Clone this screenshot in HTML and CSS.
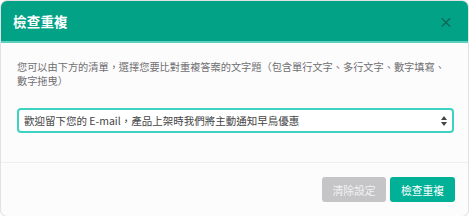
FILE: index.html
```html
<!DOCTYPE html>
<html lang="zh-Hant">
  <head>
    <meta charset="UTF-8" />
    <meta name="viewport" content="width=device-width, initial-scale=1.0" />
    <title>檢查重複</title>
    <link rel="stylesheet" href="styles.css">
  </head>
  <body>
    <div class="modal">
      <div class="modal-header">
        <h2 class="modal-title">檢查重複</h2>
        <span class="close">&times;</span>
      </div>

      <div class="modal-body">
        <p class="hint">您可以由下方的清單，選擇您要比對重複答案的文字題（包含單行文字、多行文字、數字填寫、數字拖曳）</p>
        <!-- question picker -->
        <div class="picker">
          <span class="picker-text">歡迎留下您的 E-mail，產品上架時我們將主動通知早鳥優惠</span>
          <svg class="picker-arrows" width="6" height="10" viewBox="0 0 6 10">
            <path d="M3 0 L6 4 L0 4 Z" fill="#444" />
            <path d="M0 6 L6 6 L3 10 Z" fill="#444" />
          </svg>
        </div>
      </div>

      <div class="modal-footer">
        <button class="btn btn-clear">清除設定</button>
        <button class="btn btn-check">檢查重複</button>
      </div>
    </div>
  </body>
</html>
```

FILE: styles.css
```css
/* Basic reset */
body,
html {
  margin: 0;
  padding: 0;
  background-color: #ffffff;
  font-family: "Noto Sans CJK TC", "Liberation Sans", sans-serif;
}

/* Dialog box */
.modal {
  margin: 1px 0 0 1px;
  width: 467px;
  background-color: #fdfcfd;
  border-radius: 6px;
  box-shadow: 0 0 0 1px #e2e1e3;
  overflow: hidden;
}

.modal-header {
  display: flex;
  justify-content: space-between;
  align-items: center;
  height: 40px;
  padding: 0 12px 0 12px;
  background-color: #02a287;
  border-bottom: 2px solid #5fcfbf;
}

.modal-title {
  margin: 0;
  color: #ffffff;
  font-size: 13.5px;
  font-weight: bold;
  letter-spacing: 0.2px;
}

.close {
  color: #0e6a5b;
  font-size: 14px;
  font-weight: bold;
  line-height: 1;
  margin-right: 3px;
}

/* Body */
.modal-body {
  padding: 17px 14px 29px 16px;
}

.hint {
  margin: 0 0 20px 0;
  color: #6f6f71;
  font-size: 10.2px;
  line-height: 14px;
}

.picker {
  display: flex;
  align-items: center;
  justify-content: space-between;
  height: 21px;
  padding: 0 5px 0 5px;
  border: 2px solid #3ed2c2;
  border-radius: 4px;
  background-color: #ffffff;
}

.picker-text {
  color: #444446;
  font-size: 10.5px;
}

.picker-arrows {
  display: block;
}

/* Footer */
.modal-footer {
  display: flex;
  justify-content: flex-end;
  gap: 4px;
  padding: 14px 13px 14px 0;
  border-top: 1px solid #f0eef0;
}

.btn {
  height: 25px;
  width: 65px;
  border: none;
  border-radius: 3px;
  color: #ffffff;
  font-family: inherit;
  font-size: 10.8px;
  padding: 0;
}

.btn-clear {
  width: 64px;
  background-color: #c5c4c7;
  color: #f2f2f2;
}

.btn-check {
  background-color: #00b097;
}
```
